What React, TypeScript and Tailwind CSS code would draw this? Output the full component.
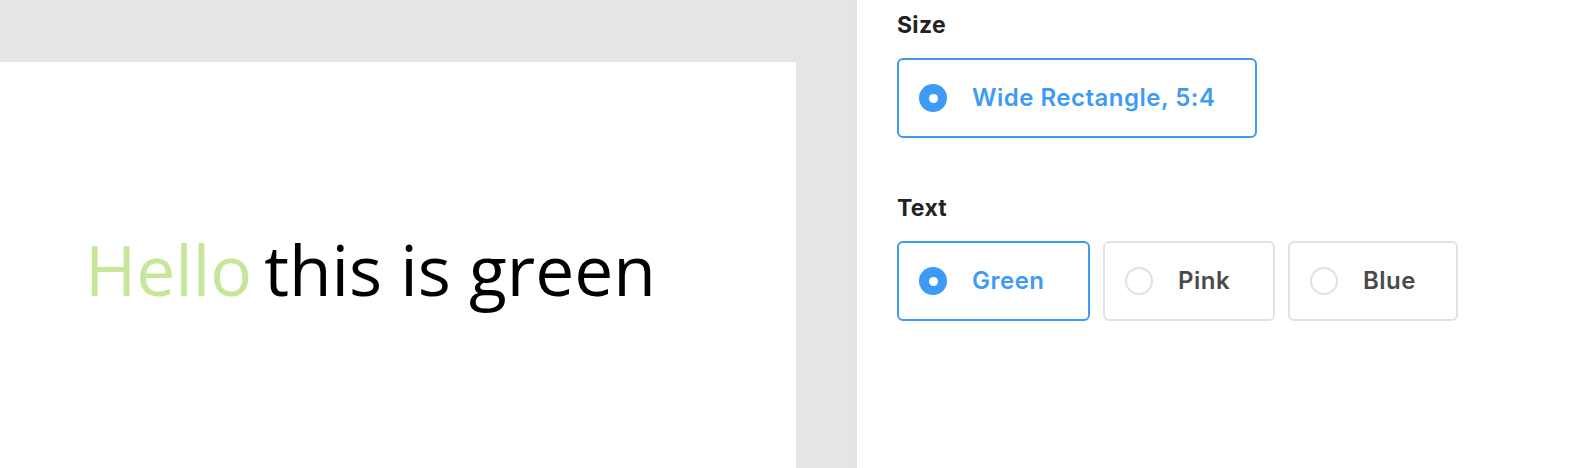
import { useState } from 'react';

type Opt = { id: string; label: string; w: string };

const textOptions: Opt[] = [
  { id: 'green', label: 'Green', w: 'w-[193px]' },
  { id: 'pink', label: 'Pink', w: 'w-[172px]' },
  { id: 'blue', label: 'Blue', w: 'w-[170px]' },
];

function Radio({ on }: { on: boolean }) {
  return on ? (
    <span className="flex h-[28px] w-[28px] shrink-0 items-center justify-center rounded-full bg-[#3d9bf5]">
      <span className="h-[9px] w-[9px] rounded-full bg-white" />
    </span>
  ) : (
    <span className="h-[28px] w-[28px] shrink-0 rounded-full border-2 border-[#dde2e6] bg-white" />
  );
}

function Option({ label, on, w, onClick }: { label: string; on: boolean; w: string; onClick: () => void }) {
  return (
    <button
      onClick={onClick}
      className={
        'flex h-[80px] items-center gap-[25px] rounded-[6px] border-2 pl-[20px] text-left ' +
        w +
        (on ? ' border-[#3d9bf5] text-[#3d9bf5]' : ' border-[#dfe3e7] text-[#4a4a4a]')
      }
    >
      <Radio on={on} />
      <span className="text-[24px] font-semibold leading-[26px] tracking-[0.5px]">{label}</span>
    </button>
  );
}

export default function App() {
  const [color, setColor] = useState('green');

  return (
    <div className="flex h-[468px] w-[1572px] overflow-hidden font-['Inter',sans-serif]">
      {/* preview area */}
      <div className="flex w-[854px] shrink-0 flex-col bg-[#e5e5e5] pt-[62px]">
        <div className="w-[796px] flex-1 bg-white pl-[85px] pt-[171px]">
          <p className="font-['Open_Sans',sans-serif] text-[69.5px] leading-[72px] text-black">
            <span className="text-[#c6e79a]">Hello</span>
            <span className="ml-[12px]">this is green</span>
          </p>
        </div>
      </div>

      {/* settings panel */}
      <div className="flex-1 border-l-[3px] border-[#dfe4e9] bg-white pl-[40px] pt-[12px]">
        <h3 className="text-[23px] font-bold leading-[26px] tracking-[0.3px] text-[#222]">Size</h3>
        <div className="mt-[20px]">
          <Option label="Wide Rectangle, 5:4" on w="w-[360px]" onClick={() => {}} />
        </div>

        <h3 className="mt-[57px] text-[23px] font-bold leading-[26px] tracking-[0.3px] text-[#222]">Text</h3>
        <div className="mt-[20px] flex gap-[13px]">
          {textOptions.map(o => (
            <Option key={o.id} label={o.label} w={o.w} on={color === o.id} onClick={() => setColor(o.id)} />
          ))}
        </div>
      </div>
    </div>
  );
}
